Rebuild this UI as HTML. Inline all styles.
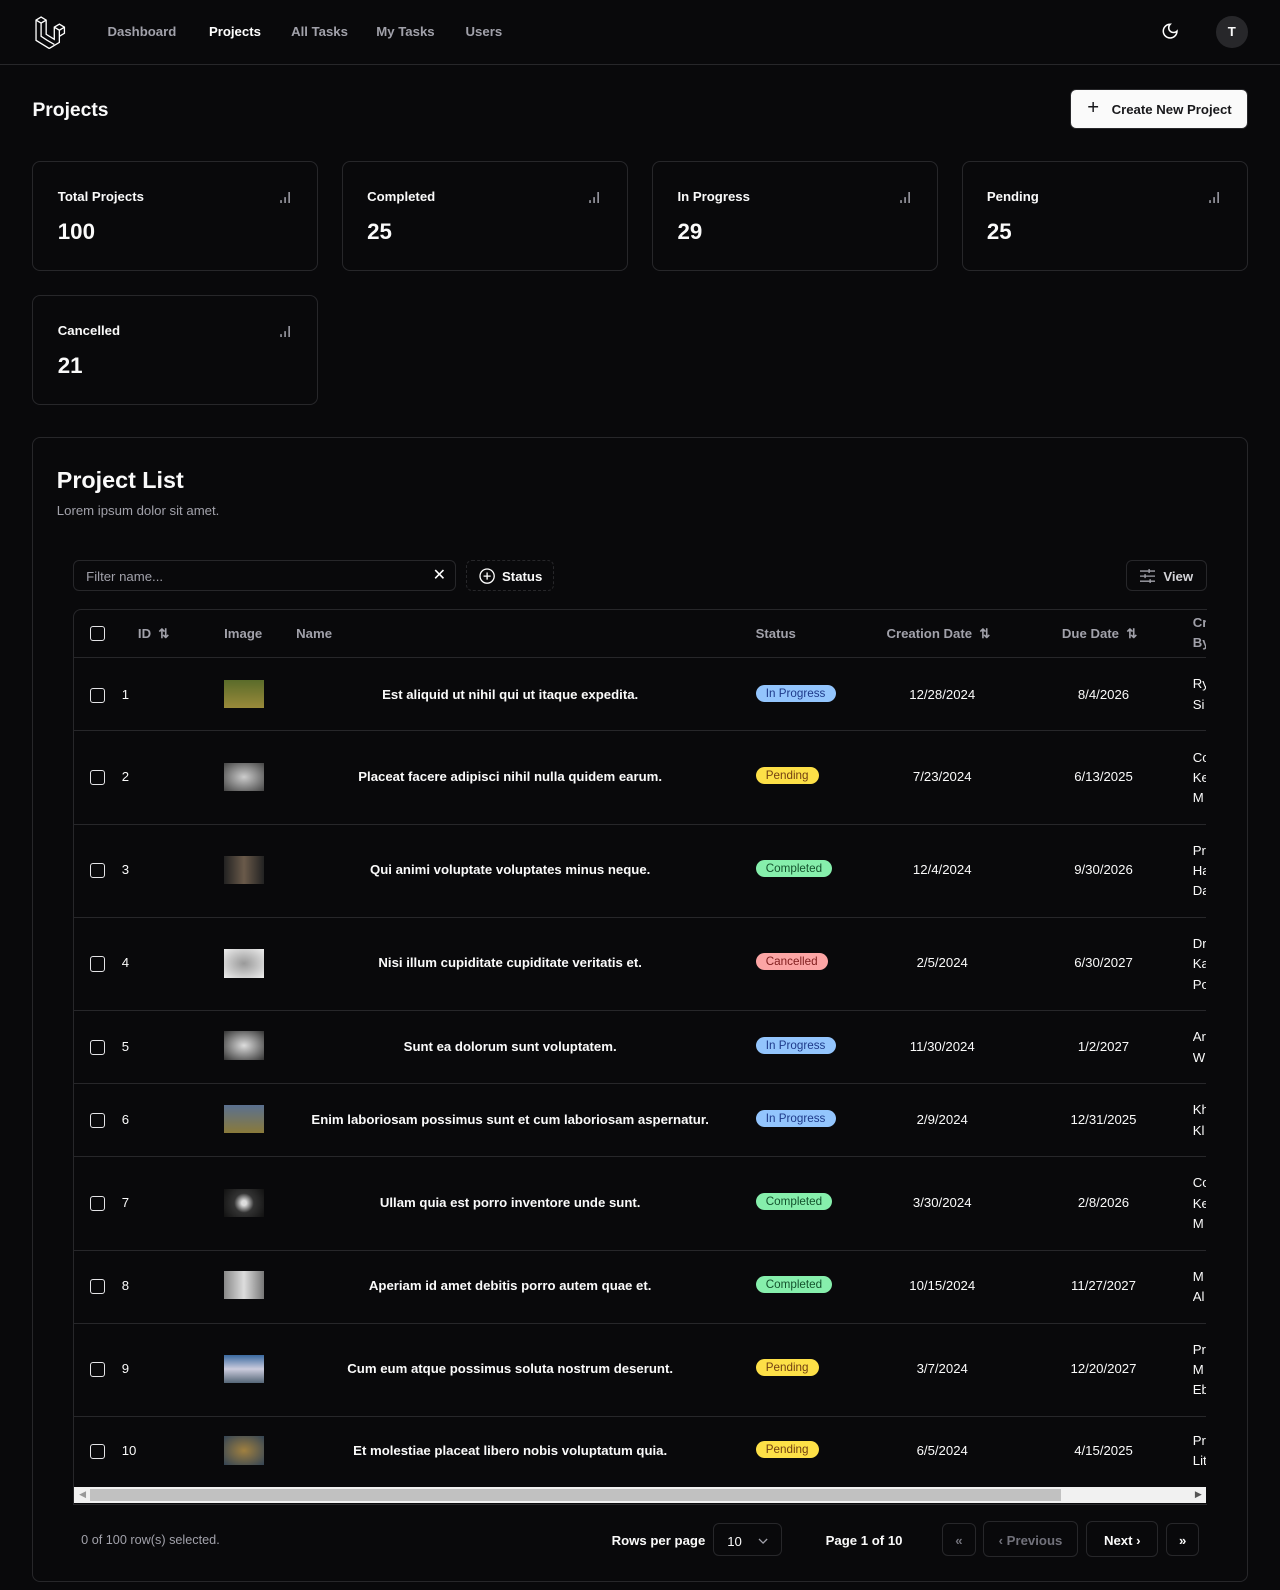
<!DOCTYPE html>
<html><head><meta charset="utf-8"><style>
html,body{margin:0;background:#09090b;}
body{zoom:1.01426;width:1262px;height:1568px;overflow:hidden;font-family:"Liberation Sans",sans-serif;color:#fafafa;position:relative;}
.a{position:absolute;white-space:nowrap;}
.nav{position:absolute;left:0;top:0;width:1262px;height:63px;border-bottom:1px solid #27272a;}
.nav span{position:absolute;top:24px;font-size:13px;font-weight:bold;color:#a1a1aa;}
.card{position:absolute;border:1px solid #27272a;border-radius:8px;width:280px;height:106px;}
.card .t{position:absolute;left:24px;top:26px;font-size:13px;font-weight:bold;}
.card .v{position:absolute;left:24px;top:56px;font-size:22px;font-weight:bold;}
.card svg{position:absolute;right:26px;top:28px;}
.btn{position:absolute;border:1px solid #27272a;border-radius:6px;font-size:13px;font-weight:bold;box-sizing:border-box;white-space:nowrap;}
.row{position:absolute;left:73px;width:1116px;border-bottom:1px solid #27272a;font-size:13px;}
.row>*{position:absolute;white-space:nowrap;}
.cb{left:16px;width:13px;height:13px;border:1.5px solid #e4e4e7;border-radius:3px;}
.nm{left:180px;width:500px;text-align:center;font-weight:bold;}
.bd{left:672px;font-size:11.5px;padding:2px 10px;border-radius:10px;}
.ip{background:#93c5fd;color:#1e3a8a;}.pe{background:#fde047;color:#713f12;}.co{background:#86efac;color:#14532d;}.ca{background:#fca5a5;color:#7f1d1d;}
.cd{left:796px;width:120px;text-align:center;}
.dd{left:955px;width:120px;text-align:center;}
.cr{left:1103px;width:13px;overflow:hidden;line-height:20px;white-space:normal !important;}
.im{left:148px;width:39px;height:28px;}
</style></head><body>
<div class="nav">
<svg class="a" style="left:34px;top:15px" width="33" height="33" viewBox="0 0 33 33" fill="none" stroke="#fff" stroke-width="1.3"><path d="M2 5l5-3 5 3v14l8 5V12l5-3 5 3v6l-5 3v6l-10 6-13-8z M2 5l5 3 5-3 M7 8v13l6 4 M20 12l5 3 5-3 M25 15v6 M13 25l7 4"/></svg>
<span style="left:106px">Dashboard</span><span style="left:206px;color:#fff">Projects</span><span style="left:287px">All Tasks</span><span style="left:371px">My Tasks</span><span style="left:459px">Users</span>
<svg class="a" style="left:1145px;top:22px" width="18" height="18" viewBox="0 0 24 24" fill="none" stroke="#fff" stroke-width="2"><path d="M12 3a6 6 0 0 0 9 9 9 9 0 1 1-9-9z"/></svg>
<div class="a" style="left:1199px;top:16px;width:31px;height:31px;border-radius:50%;background:#27272a;text-align:center;line-height:31px;font-size:13px;font-weight:bold">T</div>
</div>
<div class="a" style="left:32px;top:99px;font-size:19px;font-weight:bold">Projects</div>
<div class="btn" style="left:1055px;top:88px;width:175px;height:39px;background:#fafafa;color:#18181b;padding:12px 0 0 40px;font-size:13px"><span class="a" style="left:16px;top:7px;font-size:20px;font-weight:normal">+</span>Create New Project</div>
<div class="card" style="left:32px;top:159px"><div class="t">Total Projects</div><div class="v">100</div><svg width="12" height="12" stroke="#a1a1aa" stroke-width="1.5"><path d="M2 12V9M6 12V6M10 12V1"/></svg></div>
<div class="card" style="left:337px;top:159px"><div class="t">Completed</div><div class="v">25</div><svg width="12" height="12" stroke="#a1a1aa" stroke-width="1.5"><path d="M2 12V9M6 12V6M10 12V1"/></svg></div>
<div class="card" style="left:643px;top:159px"><div class="t">In Progress</div><div class="v">29</div><svg width="12" height="12" stroke="#a1a1aa" stroke-width="1.5"><path d="M2 12V9M6 12V6M10 12V1"/></svg></div>
<div class="card" style="left:948px;top:159px"><div class="t">Pending</div><div class="v">25</div><svg width="12" height="12" stroke="#a1a1aa" stroke-width="1.5"><path d="M2 12V9M6 12V6M10 12V1"/></svg></div>
<div class="card" style="left:32px;top:291px"><div class="t">Cancelled</div><div class="v">21</div><svg width="12" height="12" stroke="#a1a1aa" stroke-width="1.5"><path d="M2 12V9M6 12V6M10 12V1"/></svg></div>
<div class="a" style="left:32px;top:431px;width:1196px;height:1127px;border:1px solid #27272a;border-radius:8px"></div>
<div class="a" style="left:56px;top:460px;font-size:23px;font-weight:bold">Project List</div>
<div class="a" style="left:56px;top:496px;font-size:13px;color:#a1a1aa">Lorem ipsum dolor sit amet.</div>
<div class="btn" style="left:72px;top:552px;width:378px;height:31px;color:#a1a1aa;font-weight:normal;font-size:13px;padding:8px 12px">Filter name...<span class="a" style="right:9px;top:4px;font-size:16px;color:#fff">✕</span></div>
<div class="btn" style="left:459px;top:552px;width:87px;height:31px;border-style:dashed;padding:8px 0 0 35px;font-size:13px"><svg class="a" style="left:12px;top:7px" width="16" height="16" viewBox="0 0 16 16" fill="none" stroke="#fff" stroke-width="1.3"><circle cx="8" cy="8" r="7"/><path d="M8 4.5v7M4.5 8h7"/></svg>Status</div>
<div class="btn" style="left:1110px;top:552px;width:80px;height:31px;padding:8px 0 0 36px;font-size:13px;color:#d4d4d8"><svg class="a" style="left:13px;top:8px" width="15" height="14" stroke="#a1a1aa" stroke-width="1.3"><path d="M0 2h15M0 7h15M0 12h15M9 0v4M5 5v4M10 10v4"/></svg>View</div>
<div class="a" style="left:72px;top:600px;width:1117px;height:882px;border:1px solid #27272a;border-right:none;border-radius:8px 0 0 0"></div>
<div class="row" style="top:600px;height:48px;color:#a1a1aa;font-weight:bold;font-size:13px">
<div class="cb" style="top:17px"></div><div style="left:63px;top:17px">ID &nbsp;⇅</div><div style="left:148px;top:17px">Image</div><div style="left:219px;top:17px">Name</div><div style="left:672px;top:17px">Status</div><div style="left:801px;top:17px">Creation Date &nbsp;⇅</div><div style="left:974px;top:17px">Due Date &nbsp;⇅</div><div class="cr" style="top:4px">Cr By</div></div>

<div class="row" style="top:649px;height:71px"><div class="cb" style="top:29px"></div><div style="left:47px;top:28px">1</div><div class="im" style="top:21px;background:linear-gradient(#5a6b2a,#9a8a3a)"></div><div class="nm" style="top:28px">Est aliquid ut nihil qui ut itaque expedita.</div><div class="bd ip" style="top:26px">In Progress</div><div class="cd" style="top:28px">12/28/2024</div><div class="dd" style="top:28px">8/4/2026</div><div class="cr" style="top:16px">Ry Si</div></div>
<div class="row" style="top:721px;height:91px"><div class="cb" style="top:38px"></div><div style="left:47px;top:37px">2</div><div class="im" style="top:31px;background:radial-gradient(#ccc,#444)"></div><div class="nm" style="top:37px">Placeat facere adipisci nihil nulla quidem earum.</div><div class="bd pe" style="top:35px">Pending</div><div class="cd" style="top:37px">7/23/2024</div><div class="dd" style="top:37px">6/13/2025</div><div class="cr" style="top:16px">Co Ke M</div></div>
<div class="row" style="top:813px;height:91px"><div class="cb" style="top:38px"></div><div style="left:47px;top:37px">3</div><div class="im" style="top:31px;background:linear-gradient(90deg,#222,#6a5a4a,#222)"></div><div class="nm" style="top:37px">Qui animi voluptate voluptates minus neque.</div><div class="bd co" style="top:35px">Completed</div><div class="cd" style="top:37px">12/4/2024</div><div class="dd" style="top:37px">9/30/2026</div><div class="cr" style="top:16px">Pr Ha Da</div></div>
<div class="row" style="top:905px;height:91px"><div class="cb" style="top:38px"></div><div style="left:47px;top:37px">4</div><div class="im" style="top:31px;background:radial-gradient(#999,#eee)"></div><div class="nm" style="top:37px">Nisi illum cupiditate cupiditate veritatis et.</div><div class="bd ca" style="top:35px">Cancelled</div><div class="cd" style="top:37px">2/5/2024</div><div class="dd" style="top:37px">6/30/2027</div><div class="cr" style="top:16px">Dr Ka Po</div></div>
<div class="row" style="top:997px;height:71px"><div class="cb" style="top:28px"></div><div style="left:47px;top:27px">5</div><div class="im" style="top:20px;background:radial-gradient(#ddd,#333)"></div><div class="nm" style="top:27px">Sunt ea dolorum sunt voluptatem.</div><div class="bd ip" style="top:25px">In Progress</div><div class="cd" style="top:27px">11/30/2024</div><div class="dd" style="top:27px">1/2/2027</div><div class="cr" style="top:16px">Ar W</div></div>
<div class="row" style="top:1069px;height:71px"><div class="cb" style="top:28px"></div><div style="left:47px;top:27px">6</div><div class="im" style="top:20px;background:linear-gradient(#5a7090,#8a7a3a)"></div><div class="nm" style="top:27px">Enim laboriosam possimus sunt et cum laboriosam aspernatur.</div><div class="bd ip" style="top:25px">In Progress</div><div class="cd" style="top:27px">2/9/2024</div><div class="dd" style="top:27px">12/31/2025</div><div class="cr" style="top:16px">Kh Kl</div></div>
<div class="row" style="top:1141px;height:91px"><div class="cb" style="top:38px"></div><div style="left:47px;top:37px">7</div><div class="im" style="top:31px;background:radial-gradient(circle,#ddd 10%,#333 40%,#111)"></div><div class="nm" style="top:37px">Ullam quia est porro inventore unde sunt.</div><div class="bd co" style="top:35px">Completed</div><div class="cd" style="top:37px">3/30/2024</div><div class="dd" style="top:37px">2/8/2026</div><div class="cr" style="top:16px">Co Ke M</div></div>
<div class="row" style="top:1233px;height:71px"><div class="cb" style="top:28px"></div><div style="left:47px;top:27px">8</div><div class="im" style="top:20px;background:linear-gradient(90deg,#888,#ddd,#777)"></div><div class="nm" style="top:27px">Aperiam id amet debitis porro autem quae et.</div><div class="bd co" style="top:25px">Completed</div><div class="cd" style="top:27px">10/15/2024</div><div class="dd" style="top:27px">11/27/2027</div><div class="cr" style="top:16px">M Al</div></div>
<div class="row" style="top:1305px;height:91px"><div class="cb" style="top:38px"></div><div style="left:47px;top:37px">9</div><div class="im" style="top:31px;background:linear-gradient(#3a6aa0,#ccd,#567)"></div><div class="nm" style="top:37px">Cum eum atque possimus soluta nostrum deserunt.</div><div class="bd pe" style="top:35px">Pending</div><div class="cd" style="top:37px">3/7/2024</div><div class="dd" style="top:37px">12/20/2027</div><div class="cr" style="top:16px">Pr M Eb</div></div>
<div class="row" style="top:1397px;height:69px;border:none"><div class="cb" style="top:27px"></div><div style="left:47px;top:26px">10</div><div class="im" style="top:19px;background:radial-gradient(#a08040,#345)"></div><div class="nm" style="top:26px">Et molestiae placeat libero nobis voluptatum quia.</div><div class="bd pe" style="top:24px">Pending</div><div class="cd" style="top:26px">6/5/2024</div><div class="dd" style="top:26px">4/15/2025</div><div class="cr" style="top:14px">Pr Lit</div></div>
<div class="a" style="left:73px;top:1466px;width:1116px;height:16px;background:#f1f1f1"><div class="a" style="left:16px;top:2px;width:957px;height:12px;background:#c1c1c1"></div><span class="a" style="left:5px;top:2px;font-size:9px;color:#999">◀</span><span class="a" style="right:4px;top:2px;font-size:9px;color:#555">▶</span></div>
<div class="a" style="left:80px;top:1511px;font-size:12.5px;color:#a1a1aa">0 of 100 row(s) selected.</div>
<div class="a" style="left:603px;top:1511px;font-size:13px;font-weight:bold">Rows per page</div>
<div class="btn" style="left:703px;top:1502px;width:68px;height:32px;padding:9px 0 0 13px;font-size:13px;font-weight:normal">10<svg class="a" style="left:43px;top:13px" width="10" height="6" fill="none" stroke="#a1a1aa" stroke-width="1.3"><path d="M1 1l4 4 4-4"/></svg></div>
<div class="a" style="left:814px;top:1511px;font-size:13px;font-weight:bold">Page 1 of 10</div>
<div class="btn" style="left:929px;top:1502px;width:33px;height:32px;text-align:center;padding-top:8px;color:#71717a">«</div>
<div class="btn" style="left:969px;top:1500px;width:94px;height:35px;text-align:center;padding-top:10px;color:#71717a">‹ Previous</div>
<div class="btn" style="left:1071px;top:1500px;width:71px;height:35px;text-align:center;padding-top:10px">Next ›</div>
<div class="btn" style="left:1150px;top:1502px;width:32px;height:32px;text-align:center;padding-top:8px">»</div>
</body></html>
